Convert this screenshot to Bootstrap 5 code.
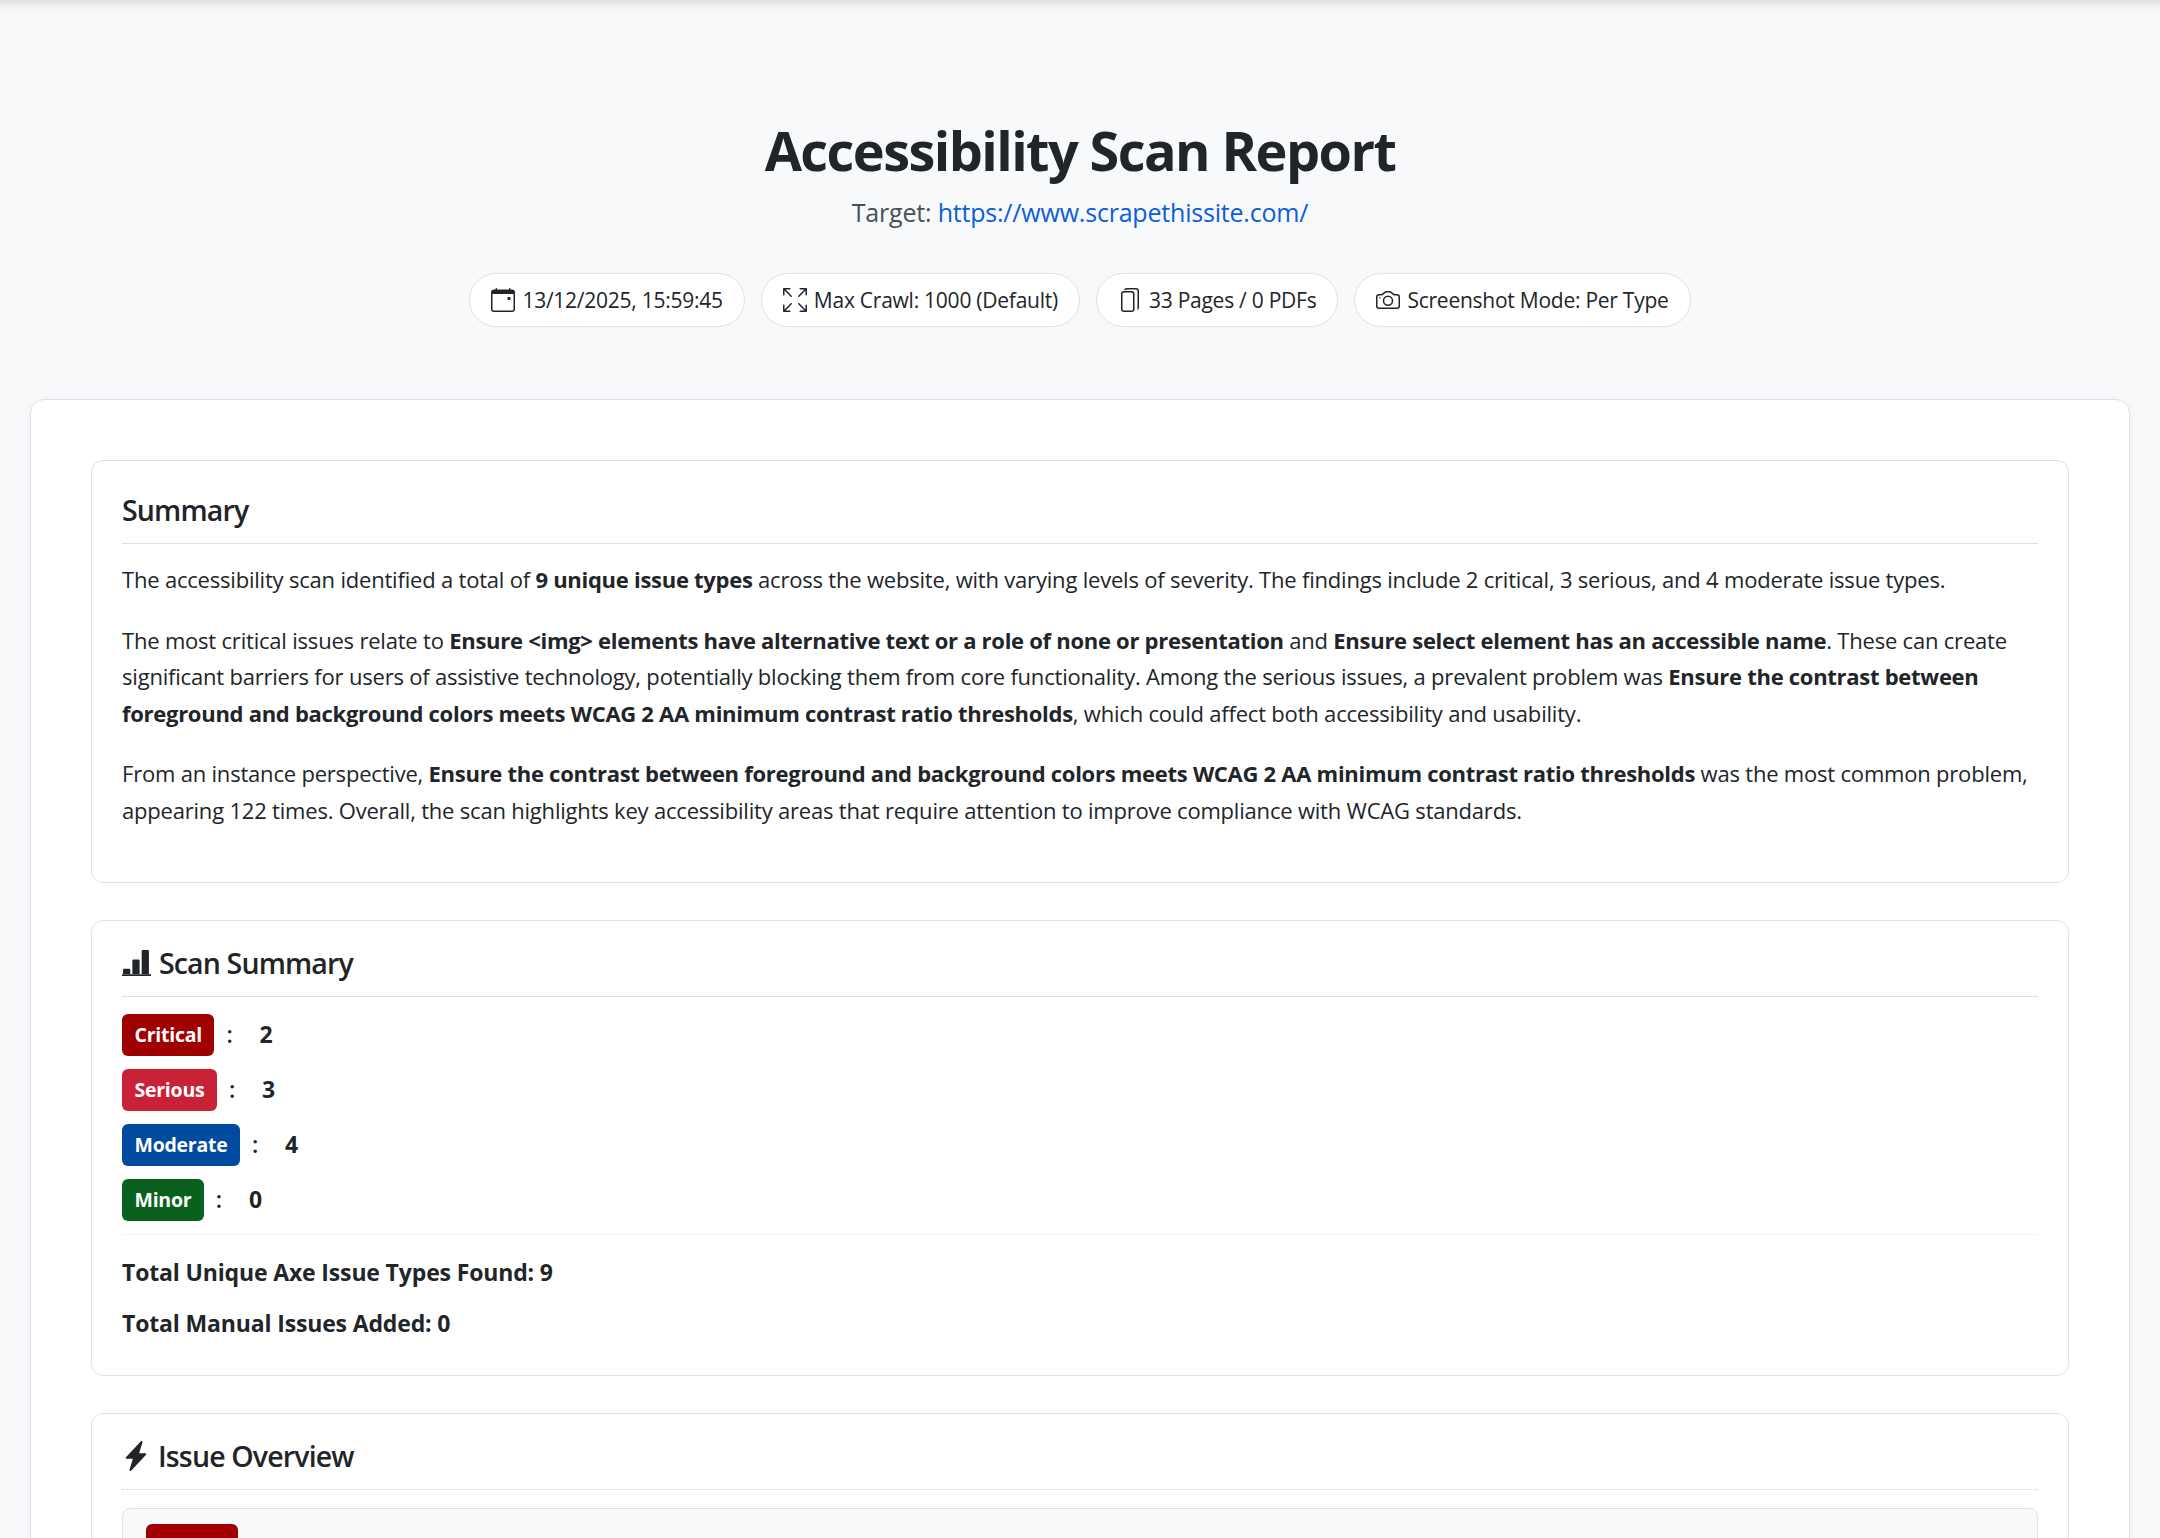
<!DOCTYPE html>
<html lang="en">

<head>
    <meta charset="UTF-8">
    <meta name="viewport" content="width=device-width, initial-scale=1.0">
    <title>Accessibility Scan Report</title>
    <link rel="stylesheet" href="https://cdn.jsdelivr.net/npm/bootstrap@5.3.2/dist/css/bootstrap.min.css">
    <style>
        html, body { height: 1538px; overflow: hidden; }
        body { background: #f8f9fa; color: #212529; font-family: "Open Sans", "Noto Sans", sans-serif; font-size: 22px; line-height: 36.5px; letter-spacing: -0.2px; box-shadow: inset 0 12px 10px -8px rgba(0,0,0,.12); }
        strong { letter-spacing: -0.28px; }
        .report-head { padding-top: 114px; height: 399px; text-align: center; }
        .report-title { font-size: 54px; font-weight: 700; line-height: 72px; margin: 0 0 8px; letter-spacing: -1.55px; }
        .report-target { font-size: 25px; color: #495057; line-height: 36px; margin: 0 0 43px; }
        .report-target a { color: #0b5ed7; text-decoration: none; }
        .meta-pill { height: 54px; padding: 0 21px; background: #fff; border: 1px solid #dee2e6; border-radius: 28px; display: inline-flex; align-items: center; gap: 7px; font-size: 21px; letter-spacing: -0.25px; }
        .meta-pill svg { width: 24px; height: 24px; flex: none; }
        .report-main { margin: 0 30px; padding: 60px; background: #fff; border: 1px solid #dee2e6; border-radius: 14px; box-shadow: 0 4px 12px rgba(0,0,0,.05); }
        .report-box { border: 1px solid #dee2e6; border-radius: 12px; padding: 24px 30px 20px; margin-bottom: 37px; }
        .report-box.first-box { padding: 31px 30px 30px; }
        .box-title { font-size: 28.5px; font-weight: 600; line-height: 36px; margin: 0 0 17px; padding-bottom: 15px; border-bottom: 1px solid #dee2e6; display: flex; align-items: center; gap: 8px; letter-spacing: -0.85px; }
        .box-title.compact { margin-bottom: 10px; }
        .box-title.dotted { margin-bottom: 18px; border-bottom: 1px dotted #ced4da; }
        .report-box p { margin: 0 0 24px; }
        .sev-row { height: 55px; display: flex; align-items: center; font-weight: 700; font-size: 23px; }
        .sev-tag { color: #fff; font-size: 19.5px; font-weight: 700; line-height: 42px; padding: 0 12.5px; border-radius: 6px; letter-spacing: -0.25px; flex: none; }
        .sev-colon { margin: 0 27px 0 12px; font-weight: 600; }
        .sev-critical { background: #a00000; }
        .sev-serious { background: #c92236; }
        .sev-moderate { background: #004a9f; }
        .sev-minor { background: #0a611d; }
        .totals { border-top: 1px solid #f1f3f5; margin-top: 7px; padding-top: 19px; font-weight: 700; font-size: 23px; letter-spacing: -0.15px; }
        .totals p { margin: 0 0 14px; }
        .issue-row { background: #f8f9fa; border: 1px solid #dee2e6; border-radius: 8px; padding: 15px 23px; display: flex; align-items: flex-start; gap: 18px; }
        .issue-row .sev-tag { line-height: 52px; }
        .issue-text { margin-top: 5px; }
    </style>
</head>

<body>
    <header class="report-head">
        <h1 class="report-title">Accessibility Scan Report</h1>
        <p class="report-target">Target: <a href="#">https://www.scrapethissite.com/</a></p>
        <div class="d-flex justify-content-center gap-3">
            <span class="meta-pill">
                <svg viewBox="0 0 16 16" fill="currentColor"><path d="M3.5 0a.5.5 0 0 1 .5.5V1h8V.5a.5.5 0 0 1 1 0V1h1a2 2 0 0 1 2 2v11a2 2 0 0 1-2 2H2a2 2 0 0 1-2-2V3a2 2 0 0 1 2-2h1V.5a.5.5 0 0 1 .5-.5zM1 4v10a1 1 0 0 0 1 1h12a1 1 0 0 0 1-1V4H1z"/><path d="M11 6.5a.5.5 0 0 1 .5-.5h1a.5.5 0 0 1 .5.5v1a.5.5 0 0 1-.5.5h-1a.5.5 0 0 1-.5-.5v-1z"/></svg>
                13/12/2025, 15:59:45</span>
            <span class="meta-pill">
                <svg viewBox="0 0 16 16" fill="currentColor"><path fill-rule="evenodd" d="M5.828 10.172a.5.5 0 0 0-.707 0l-4.096 4.096V11.5a.5.5 0 0 0-1 0v3.975a.5.5 0 0 0 .5.5H4.5a.5.5 0 0 0 0-1H1.732l4.096-4.096a.5.5 0 0 0 0-.707zm4.344 0a.5.5 0 0 1 .707 0l4.096 4.096V11.5a.5.5 0 1 1 1 0v3.975a.5.5 0 0 1-.5.5H11.5a.5.5 0 0 1 0-1h2.768l-4.096-4.096a.5.5 0 0 1 0-.707zm0-4.344a.5.5 0 0 0 .707 0l4.096-4.096V4.5a.5.5 0 1 0 1 0V.525a.5.5 0 0 0-.5-.5H11.5a.5.5 0 0 0 0 1h2.768l-4.096 4.096a.5.5 0 0 0 0 .707zm-4.344 0a.5.5 0 0 1-.707 0L1.025 1.732V4.5a.5.5 0 0 1-1 0V.525a.5.5 0 0 1 .5-.5H4.5a.5.5 0 0 1 0 1H1.732l4.096 4.096a.5.5 0 0 1 0 .707z"/></svg>
                Max Crawl: 1000 (Default)</span>
            <span class="meta-pill">
                <svg viewBox="0 0 16 16" fill="currentColor"><path d="M4 2a2 2 0 0 1 2-2h6a2 2 0 0 1 2 2v11a2 2 0 0 1-1.2 1.8c.1-.2.2-.5.2-.8V2a1 1 0 0 0-1-1H6a1 1 0 0 0-.8.4C4.5 1.4 4 1.7 4 2z"/><path d="M4 2h5a2 2 0 0 1 2 2v10a2 2 0 0 1-2 2H4a2 2 0 0 1-2-2V4a2 2 0 0 1 2-2zm0 1a1 1 0 0 0-1 1v10a1 1 0 0 0 1 1h5a1 1 0 0 0 1-1V4a1 1 0 0 0-1-1H4z"/></svg>
                33 Pages / 0 PDFs</span>
            <span class="meta-pill">
                <svg viewBox="0 0 16 16" fill="currentColor"><path d="M15 12a1 1 0 0 1-1 1H2a1 1 0 0 1-1-1V6a1 1 0 0 1 1-1h1.172a3 3 0 0 0 2.12-.879l.83-.828A1 1 0 0 1 6.827 3h2.344a1 1 0 0 1 .707.293l.828.828A3 3 0 0 0 12.828 5H14a1 1 0 0 1 1 1v6zM2 4a2 2 0 0 0-2 2v6a2 2 0 0 0 2 2h12a2 2 0 0 0 2-2V6a2 2 0 0 0-2-2h-1.172a2 2 0 0 1-1.414-.586l-.828-.828A2 2 0 0 0 9.172 2H6.828a2 2 0 0 0-1.414.586l-.828.828A2 2 0 0 1 3.172 4H2z"/><path d="M8 11a2.5 2.5 0 1 1 0-5 2.5 2.5 0 0 1 0 5zm0 1a3.5 3.5 0 1 0 0-7 3.5 3.5 0 0 0 0 7zM3 6.5a.5.5 0 1 1-1 0 .5.5 0 0 1 1 0z"/></svg>
                Screenshot Mode: Per Type</span>
        </div>
    </header>

    <main class="report-main">
        <section class="report-box first-box">
            <h2 class="box-title">Summary</h2>
            <p>The accessibility scan identified a total of <strong>9 unique issue types</strong> across the website, with varying levels of severity. The findings include 2 critical, 3 serious, and 4 moderate issue types.</p>
            <p>The most critical issues relate to <strong>Ensure &lt;img&gt; elements have alternative text or a role of none or presentation</strong> and <strong>Ensure select element has an accessible name</strong>. These can create significant barriers for users of assistive technology, potentially blocking them from core functionality. Among the serious issues, a prevalent problem was <strong>Ensure the contrast between foreground and background colors meets WCAG 2 AA minimum contrast ratio thresholds</strong>, which could affect both accessibility and usability.</p>
            <p>From an instance perspective, <strong>Ensure the contrast between foreground and background colors meets WCAG 2 AA minimum contrast ratio thresholds</strong> was the most common problem, appearing 122 times. Overall, the scan highlights key accessibility areas that require attention to improve compliance with WCAG standards.</p>
        </section>

        <section class="report-box">
            <h2 class="box-title compact">
                <svg width="29" height="26" viewBox="0 0 28 25" fill="currentColor"><path d="M1 19a1 1 0 0 1 1-1h5a1 1 0 0 1 1 1v4H1zM10 10a1 1 0 0 1 1-1h5a1 1 0 0 1 1 1v13h-7zM19 1a1 1 0 0 1 1-1h5a1 1 0 0 1 1 1v22h-7zM0 23.4h28V25H0z"/></svg>
                Scan Summary</h2>
            <div class="sev-row"><span class="sev-tag sev-critical">Critical</span><span class="sev-colon">:</span>2</div>
            <div class="sev-row"><span class="sev-tag sev-serious">Serious</span><span class="sev-colon">:</span>3</div>
            <div class="sev-row"><span class="sev-tag sev-moderate">Moderate</span><span class="sev-colon">:</span>4</div>
            <div class="sev-row"><span class="sev-tag sev-minor">Minor</span><span class="sev-colon">:</span>0</div>
            <div class="totals">
                <p>Total Unique Axe Issue Types Found: 9</p>
                <p>Total Manual Issues Added: 0</p>
            </div>
        </section>

        <section class="report-box">
            <h2 class="box-title dotted">
                <svg width="28" height="30" viewBox="1 0 14 16" fill="currentColor"><path d="M11.251.068a.5.5 0 0 1 .227.58L9.677 6.5H13a.5.5 0 0 1 .364.843l-8 8.5a.5.5 0 0 1-.842-.49L6.323 9.5H3a.5.5 0 0 1-.364-.843l8-8.5a.5.5 0 0 1 .615-.09z"/></svg>
                Issue Overview</h2>
            <div class="issue-row">
                <span class="sev-tag sev-critical">Critical</span>
                <span class="issue-text">Ensure &lt;img&gt; elements have alternative text or a role of none or presentation</span>
            </div>
        </section>
    </main>

    <script src="https://cdn.jsdelivr.net/npm/bootstrap@5.3.2/dist/js/bootstrap.bundle.min.js"></script>
</body>

</html>
